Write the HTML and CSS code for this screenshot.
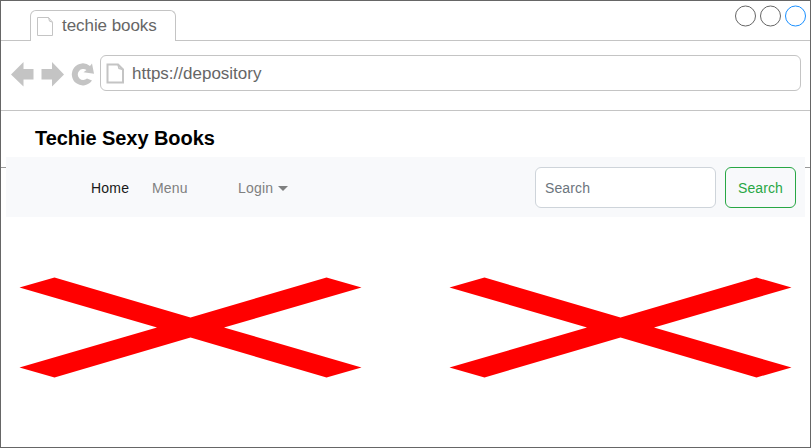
FILE: index.html
```html
<!DOCTYPE html>
<html lang="en">
<head>
<meta charset="utf-8">
<title>techie books</title>
<link rel="stylesheet" href="styles.css">
</head>
<body>
<div class="window">
  <header class="tab-bar">
    <div class="tab">
      <svg class="tab-icon" width="17" height="20" viewBox="0 0 17 20"><path d="M.5.5H11.5L15.500 5.200V18.500H.5ZM11.500.5 12.500 4.200 15.500 5.200"/></svg>
      <span>techie books</span>
    </div>
    <svg class="controls" width="72" height="22" viewBox="0 0 72 22">
      <circle cx="10.500" cy="11" r="10"/><circle cx="35.500" cy="11" r="10"/><circle class="active" cx="60.500" cy="11" r="10"/>
    </svg>
  </header>
  <div class="toolbar">
    <svg class="nav-icons" width="86" height="26" viewBox="0 0 86 26">
      <path d="M0 13.500 12.500 1V8H22.500V18.500H12.500V25.500ZM53 13.500 41 1V8H30.500V18.500H41V25.500Z"/>
      <path d="M81 2.500 83 12.700 72.500 11.300 75.500 9A5.500 5.500 0 1 0 76 17.500L81 19.500A11 11 0 1 1 79 5Z"/>
    </svg>
    <div class="address">
      <svg class="page-icon" width="19" height="21" viewBox="0 0 19 21"><path d="M1.500 1.500H12L17 6.500V19.500H1.500Z"/><path class="fold" d="M12 1.500 13 5.500 17 6.500"/></svg>
      <span>https://depository</span>
    </div>
  </div>
  <main class="page">
    <h1>Techie Sexy Books</h1>
    <div class="nav-row">
      <nav class="navbar">
        <a class="link home">Home</a>
        <a class="link menu">Menu</a>
        <a class="link login">Login <svg class="caret" width="10" height="5" viewBox="0 0 10 5"><path d="M0 0H10L5 5Z"/></svg></a>
        <input class="field" type="text" placeholder="Search">
        <button class="submit">Search</button>
      </nav>
    </div>
    <div class="pictures">
      <svg width="342" height="102" viewBox="0 0 342 102"><path d="M-.5 10.500 34.500.500 170.500 40.500 306.500.500 341.500 10.500 204 50.500 341.500 90.500 306.500 100.500 170.500 60.500 34.500 100.500-.5 90.500 137 50.500Z"/></svg>
      <svg width="342" height="102" viewBox="0 0 342 102"><path d="M-.5 10.500 34.500.500 170.500 40.500 306.500.500 341.500 10.500 204 50.500 341.500 90.500 306.500 100.500 170.500 60.500 34.500 100.500-.5 90.500 137 50.500Z"/></svg>
    </div>
  </main>
</div>
</body>
</html>
```
FILE: styles.css
```css
* { box-sizing: border-box; }
body { margin: 0; background: #fff; font-family: "Liberation Sans", Arial, sans-serif; }
svg { display: block; flex: none; overflow: visible; }
.window { width: 811px; height: 448px; border: 1px solid #666; overflow: hidden; }
.tab-bar { display: flex; justify-content: space-between; height: 40px; padding: 0 3px 0 29px; border-bottom: 1px solid #c4c4c4; }
.tab {
  display: flex; width: 146px; height: 31px; margin-top: 9px; padding: 6px 0 0 6px;
  border: 1px solid #c4c4c4; border-bottom: 0; border-radius: 6px 6px 0 0;
  background: #fff; color: #666; font-size: 17px; line-height: 19px; letter-spacing: -.06px;
}
.tab span { margin: -1px 0 0 8px; white-space: nowrap; }
.tab-icon { fill: none; stroke: #c4c4c4; }
.controls { margin-top: 3.500px; fill: none; stroke: #666; stroke-width: 1; }
.controls .active { stroke: #1a90ff; }
.toolbar { display: flex; height: 70px; padding: 14px 9px 0 10px; border-bottom: 1px solid #c4c4c4; }
.nav-icons { margin: 6px 3px 0 0; fill: #c4c4c4; }
.address {
  display: flex; flex: 1; height: 36px; padding: 7px 0 0 5px;
  border: 1px solid #c4c4c4; border-radius: 6px;
  color: #666; font-size: 17px; line-height: 21px;
}
.address span { margin-left: 7px; }
.page-icon { fill: none; stroke: #c4c4c4; stroke-width: 2; }
.page-icon .fold { stroke-width: 1.500; }
h1 { height: 46px; margin: 0; padding: 16px 0 0 34px; font-size: 20px; line-height: 23px; letter-spacing: -.06px; color: #000; }
.nav-row { padding: 0 5px 0 4.500px; background: linear-gradient(#999, #999) 0 10px / 100% 1px no-repeat; }
.navbar { display: flex; align-items: center; height: 60px; padding: 0 9px 0 85.500px; background: #f8f9fb; font-size: 14px; color: #7f8080; }
.link { margin-top: 2px; white-space: nowrap; letter-spacing: .2px; }
.home { width: 61px; color: #191919; }
.menu { width: 86px; }
.login { display: flex; align-items: center; gap: 5px; }
.caret { fill: #7f8080; }
.field {
  width: 181px; height: 41px; margin: 0 9px 0 auto; padding: 2px 9px 0;
  border: 1px solid #ced4da; border-radius: 6px; background: #fff; font: inherit; letter-spacing: .12px;
}
.field::placeholder { color: #6c757d; opacity: 1; }
.submit { width: 71px; height: 41px; padding: 2px 0 0; border: 1px solid #28a745; border-radius: 6px; background: none; color: #28a745; font: inherit; letter-spacing: .1px; }
.pictures { display: flex; gap: 88px; padding: 60px 0 0 19px; fill: #f00; }
```
